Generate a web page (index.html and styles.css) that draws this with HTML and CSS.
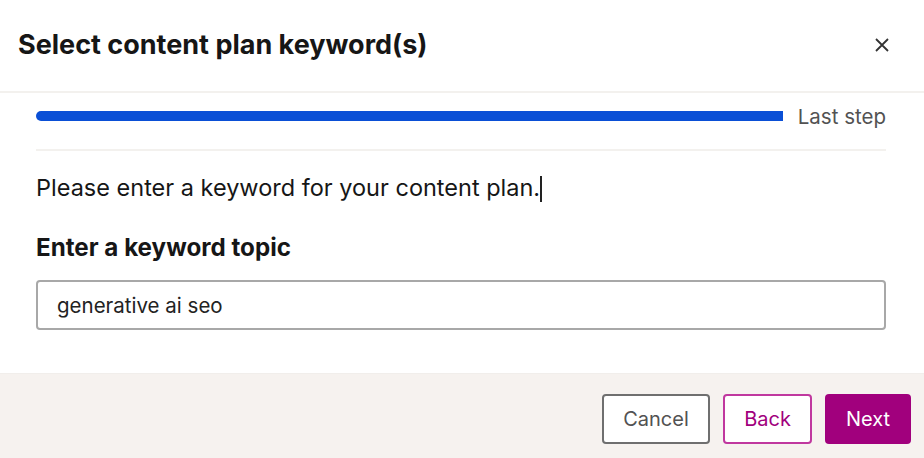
FILE: index.html
```html
<!DOCTYPE html>
<html>
<head>
<meta charset="utf-8">
<link rel="stylesheet" href="styles.css">
</head>
<body>
<div class="dialog">
  <div class="header">
    <h1 class="title">Select content plan keyword(s)</h1>
    <button class="close" aria-label="Close">
      <svg width="16" height="16" viewBox="0 0 16 16"><path d="M2 2 L14 14 M14 2 L2 14" stroke="#333" stroke-width="1.8" fill="none"/></svg>
    </button>
  </div>
  <div class="content">
    <div class="progress-row">
      <div class="progress"><div class="progress-fill"></div></div>
      <span class="step">Last step</span>
    </div>
    <p class="intro">Please enter a keyword for your content plan.<span class="caret"></span></p>
    <label class="label">Enter a keyword topic</label>
    <div class="input">generative ai seo</div>
  </div>
  <div class="footer">
    <button class="btn btn-cancel">Cancel</button>
    <button class="btn btn-back">Back</button>
    <button class="btn btn-next">Next</button>
  </div>
</div>
</body>
</html>
```
FILE: styles.css
```css
* { box-sizing: border-box; }
body {
  margin: 0;
  background: #fff;
  font-family: Inter, "Noto Sans", sans-serif;
  color: #161616;
}
.dialog {
  width: 924px;
  height: 458px;
  display: flex;
  flex-direction: column;
}
.header {
  height: 93px;
  border-bottom: 2px solid #f3f1ee;
  display: flex;
  align-items: center;
  justify-content: space-between;
  padding: 0 34px 2px 18px;
}
.title {
  margin: 0;
  font-size: 27px;
  font-weight: 700;
}
.close {
  border: 0;
  background: none;
  padding: 0;
  width: 16px;
  height: 16px;
  display: flex;
}
.content {
  flex: 1;
  padding: 0 38px 0 36px;
}
.progress-row {
  height: 58px;
  display: flex;
  align-items: center;
  gap: 15px;
  border-bottom: 2px solid #f3f1ee;
  padding-bottom: 10px;
}
.progress {
  flex: 1;
  height: 10px;
}
.progress-fill {
  height: 100%;
  background: #0a4fd6;
  border-radius: 5px 0 0 5px;
}
.step {
  font-size: 20.5px;
  color: #525252;
}
.intro {
  margin: 20px 0 0;
  font-size: 23.5px;
  line-height: 34px;
  color: #161616;
}
.caret {
  display: inline-block;
  width: 2px;
  height: 26px;
  background: #222;
  vertical-align: -6px;
}
.label {
  display: block;
  margin-top: 29px;
  font-size: 24.2px;
  font-weight: 700;
  line-height: 28px;
}
.input {
  margin-top: 18px;
  height: 50px;
  border: 2px solid #a8a8a8;
  border-radius: 4px;
  padding: 0 19px;
  display: flex;
  align-items: center;
  font-size: 20.5px;
  color: #222;
}
.footer {
  height: 85px;
  background: #f6f2ef;
  border-top: 1px solid #f1eeeb;
  display: flex;
  justify-content: flex-end;
  align-items: flex-start;
  gap: 13px;
  padding: 20px 13px 0;
}
.btn {
  height: 50px;
  border-radius: 4px;
  font-family: inherit;
  font-size: 20px;
  padding: 0;
  background: #fff;
}
.btn-cancel {
  width: 108px;
  border: 2px solid #6f6f6f;
  color: #525252;
}
.btn-back {
  width: 89px;
  border: 2px solid #c0389f;
  color: #a1007d;
}
.btn-next {
  width: 86px;
  border: 0;
  background: #a1007d;
  color: #fff;
}
```
